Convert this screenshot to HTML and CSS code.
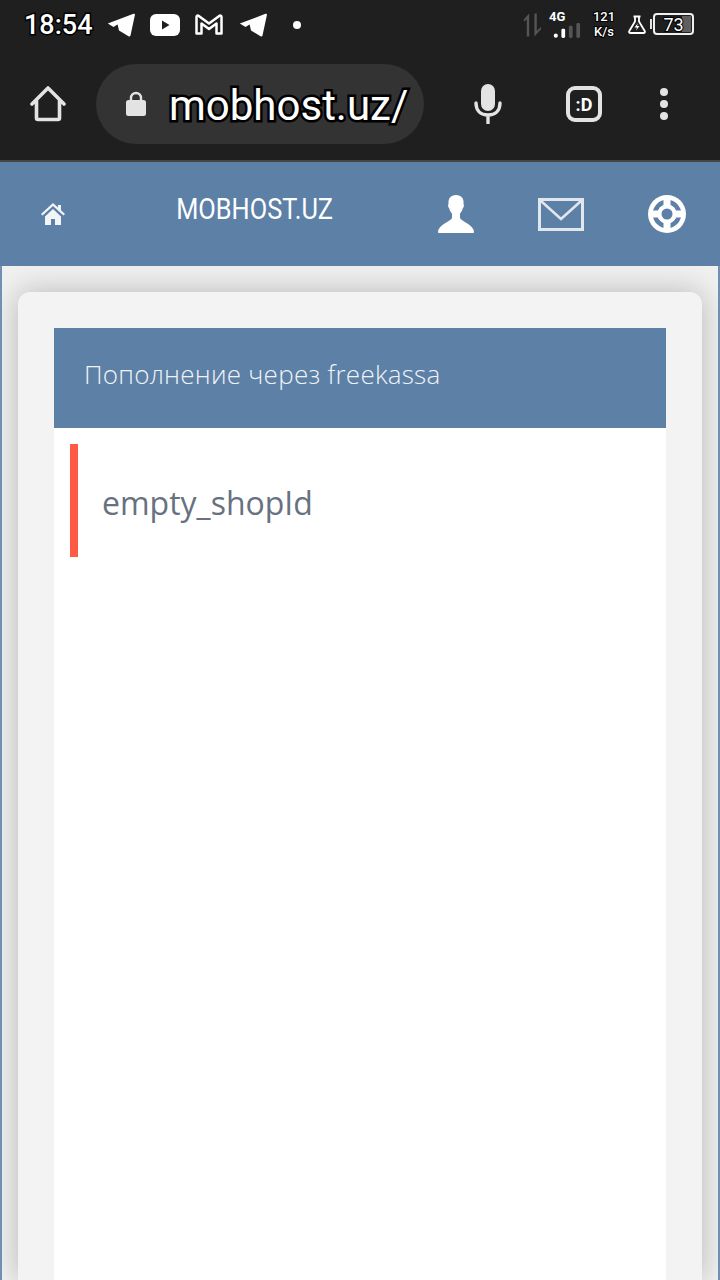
FILE: index.html
```html
<!DOCTYPE html>
<html lang="en">
<head>
    <title>mobhost.uz</title>
    <link rel="stylesheet" href="styles.css">
</head>
<body>
<div class="status-bar">
    <div class="status-left">
        <span class="clock">18:54</span>
        <svg class="ic-tg" viewBox="0 0 28 24"><path d="M.8 10.500 26.500.8c1-.4 1.700.2 1.400 1.300L23.500 22.500c-.3 1.100-1.100 1.400-2 .8L12 17.500 10.500 11 20 5.500 6.500 14z" fill="#fff"/></svg>
        <svg class="ic-yt" viewBox="0 0 30 22"><rect width="30" height="22" rx="6" fill="#fff"/><path d="M12 6.500v9l7.500-4.500z" fill="#1f1f1f"/></svg>
        <svg class="ic-gm" viewBox="0 0 28 21"><path d="M1.500 19.500V3c0-1.300 1.300-1.800 2.300-1.100L14 9.500l10.200-7.600c1-.7 2.300-.2 2.300 1.100v16.500h-5V9.500L14 15 6.500 9.500v10z" fill="none" stroke="#fff" stroke-width="2.500" stroke-linejoin="round"/></svg>
        <svg class="ic-tg" viewBox="0 0 28 24"><path d="M.8 10.500 26.500.8c1-.4 1.700.2 1.400 1.300L23.500 22.500c-.3 1.100-1.100 1.400-2 .8L12 17.500 10.500 11 20 5.500 6.500 14z" fill="#fff"/></svg>
        <span class="dot"></span>
    </div>
    <div class="status-right">
        <svg class="ic-arrows" viewBox="0 0 20 24"><path d="M4 24V6L1 8.500V6L6.500 0V24zM12 0h2.500V18L19 14v2.500L12 24z" fill="#555"/></svg>
        <div class="net">
            <span class="net-label">4G</span>
            <svg class="ic-signal" viewBox="0 0 30 16"><circle cx="3" cy="13.500" r="2.200" fill="#fff"/><rect x="9" y="6" width="4" height="10" rx="1.500" fill="#fff"/><rect x="17" y="3" width="4" height="13" rx="1.500" fill="#555"/><rect x="25" y="0" width="4" height="16" rx="1.500" fill="#555"/></svg>
        </div>
        <div class="speed"><span>121</span><span>K/s</span></div>
        <svg class="ic-flask" viewBox="0 0 18 19"><path d="M5.500 1.500h7M7 1.500v5L1.300 16c-.6 1.100 0 2 1.200 2h13c1.200 0 1.800-.9 1.200-2L11 6.500v-5" fill="none" stroke="#fff" stroke-width="1.800"/><path d="M10 8 6.500 12.500h2.500L8 15.500l3.500-4.500H9z" fill="#fff"/></svg>
        <div class="battery">
            <span class="battery-nub"></span>
            <div class="battery-body"><span class="battery-fill"></span><span class="battery-num">73</span></div>
        </div>
    </div>
</div>

<div class="browser-bar">
    <svg class="ic-browser-home" viewBox="0 0 36 36"><path d="M2 18 18 2l16 16M6.500 15v17c0 1 .5 1.500 1.500 1.500h20c1 0 1.500-.5 1.500-1.500V15" fill="none" stroke="#e3e3e3" stroke-width="3.600" stroke-linecap="round" stroke-linejoin="round"/></svg>
    <div class="url-pill">
        <svg class="ic-lock" viewBox="0 0 20 26"><path d="M5 11V7a5 5 0 0 1 10 0v4" fill="none" stroke="#e3e3e3" stroke-width="2.400"/><rect y="9" width="20" height="16" rx="2.500" fill="#e3e3e3"/></svg>
        <span class="url">mobhost.uz/</span>
    </div>
    <svg class="ic-mic" viewBox="0 0 28 40"><rect x="7" y="0" width="14" height="27" rx="7" fill="#e3e3e3"/><path d="M2 19c0 8 5 12 12 12s12-4 12-12M14 31v8" fill="none" stroke="#e3e3e3" stroke-width="3.400" stroke-linecap="round"/></svg>
    <div class="tab-count">:D</div>
    <div class="menu-dots"><span></span><span></span><span></span></div>
</div>

<div class="site-header">
    <div class="nav-cell">
        <svg class="ic-nav-home" viewBox="0 0 24 22"><path d="M12 0 0 11l1.500 1.500L12 3l10.500 9.500L24 11l-4-3.700V2h-3v2.500zM4 13.500V22h6v-6h4v6h6v-8.500L12 6z" fill="#f2f5f8"/></svg>
    </div>
    <div class="nav-cell site-title">MOBHOST.UZ</div>
    <div class="nav-cell">
        <svg class="ic-user" viewBox="0 0 36 38"><path d="M18 0c5.500 0 8 3.500 7.500 9 .7.500.6 3-.8 4.500-.6 2.500-1.700 4-2.700 5v4.500C23 26 36 30 36 37c0 .6-.4 1-1 1H1c-.6 0-1-.4-1-1 0-7 13-11 14-14v-4.500c-1-1-2.100-2.500-2.700-5-1.400-1.500-1.500-4-.8-4.500C10 3.500 12.500 0 18 0z" fill="#fff"/></svg>
    </div>
    <div class="nav-cell">
        <svg class="ic-mail" viewBox="0 0 46 33"><rect x="1.500" y="1.500" width="43" height="30" fill="none" stroke="#e0e7ee" stroke-width="3"/><path d="M3 3 23 21 43 3" fill="none" stroke="#e0e7ee" stroke-width="2.600"/></svg>
    </div>
    <div class="nav-cell">
        <svg class="ic-buoy" viewBox="0 0 38 38"><circle cx="19" cy="19" r="19" fill="#fff"/><circle cx="19" cy="19" r="12" fill="none" stroke="#5d80a7" stroke-width="4.600"/><path d="M15.500 4h7v30h-7zM4 15.500h30v7H4z" fill="#fff"/><circle cx="19" cy="19" r="9.500" fill="#fff"/><circle cx="19" cy="19" r="5.500" fill="#5d80a7"/></svg>
    </div>
</div>

<div class="page">
    <div class="card">
        <div class="panel">
            <div class="panel-head">Пополнение через freekassa</div>
            <div class="panel-body">
                <div class="alert">empty_shopId</div>
            </div>
        </div>
    </div>
</div>
</body>
</html>
```

FILE: styles.css
```css
html, body {
    margin: 0;
    height: 100%;
}

body {
    width: 720px;
    height: 1280px;
    overflow: hidden;
    display: flex;
    flex-direction: column;
    background: #1f1f1f;
    font-family: "Open Sans", sans-serif;
}

svg {
    display: block;
    flex-shrink: 0;
}

/* phone status bar */
.status-bar {
    height: 48px;
    display: flex;
    justify-content: space-between;
    background: #1f1f1f;
    font-family: Roboto, sans-serif;
    color: #fff;
}

.status-left {
    display: flex;
    align-items: center;
    padding-left: 24px;
    height: 49px;
}

.clock {
    font-size: 27px;
    font-weight: 500;
    width: 83px;
    -webkit-text-stroke: 3px #000;
    paint-order: stroke fill;
}

.ic-tg {
    width: 28px;
    height: 24px;
}

.ic-yt {
    width: 30px;
    height: 22px;
    margin: 0 15px;
}

.ic-gm {
    width: 28px;
    height: 21px;
    margin-right: 16px;
}

.dot {
    width: 8px;
    height: 8px;
    border-radius: 50%;
    background: #fff;
    margin-left: 26px;
}

.status-right {
    display: flex;
    align-items: center;
    padding-right: 26px;
}

.ic-arrows {
    width: 19px;
    height: 24px;
    margin-top: 2px;
}

.net {
    width: 30px;
    margin-left: 7px;
    margin-top: 1px;
    display: flex;
    flex-direction: column;
    align-items: flex-start;
}

.net-label {
    font-size: 13px;
    font-weight: 700;
    line-height: 12px;
}

.ic-signal {
    width: 28px;
    height: 15px;
    margin-left: 4px;
}

.speed {
    display: flex;
    flex-direction: column;
    align-items: center;
    width: 28px;
    margin-left: 11px;
    font-size: 13px;
    font-weight: 500;
    line-height: 15px;
    -webkit-text-stroke: 2px #000;
    paint-order: stroke fill;
}

.ic-flask {
    width: 18px;
    height: 19px;
    margin-left: 10px;
}

.battery {
    display: flex;
    align-items: center;
    margin-left: 4px;
}

.battery-nub {
    width: 2px;
    height: 10px;
    background: #e3e3e3;
    margin-right: 1px;
}

.battery-body {
    width: 37px;
    height: 18px;
    border: 2px solid #f0f0f0;
    border-radius: 4px;
    display: flex;
    align-items: center;
    justify-content: center;
    position: relative;
    font-size: 18px;
}

.battery-fill {
    position: absolute;
    right: 1px;
    top: 1px;
    bottom: 1px;
    width: 9px;
    background: #5f5f5f;
}

.battery-num {
    position: relative;
    -webkit-text-stroke: 2px #000;
    paint-order: stroke fill;
}

/* chrome toolbar */
.browser-bar {
    height: 112px;
    box-sizing: border-box;
    padding: 16px 0 16px 30px;
    display: flex;
    align-items: center;
    background: #1f1f1f;
}

.ic-browser-home {
    width: 36px;
    height: 36px;
}

.url-pill {
    width: 328px;
    height: 80px;
    margin-left: 30px;
    border-radius: 40px;
    background: #333333;
    display: flex;
    align-items: center;
    box-sizing: border-box;
    padding-left: 30px;
}

.ic-lock {
    width: 20px;
    height: 26px;
}

.url {
    margin-left: 23px;
    padding-top: 3px;
    font-family: Roboto, sans-serif;
    font-size: 42px;
    color: #fff;
    -webkit-text-stroke: 5px #000;
    paint-order: stroke fill;
}

.ic-mic {
    width: 28px;
    height: 40px;
    margin-left: 50px;
}

.tab-count {
    width: 36px;
    height: 36px;
    box-sizing: border-box;
    margin-left: 64px;
    border: 4px solid #e3e3e3;
    border-radius: 9px;
    display: flex;
    align-items: center;
    justify-content: center;
    font-family: Roboto, sans-serif;
    font-size: 18px;
    font-weight: 700;
    color: #fff;
}

.menu-dots {
    margin-left: 58px;
    display: flex;
    flex-direction: column;
    gap: 4px;
}

.menu-dots span {
    width: 8px;
    height: 8px;
    border-radius: 50%;
    background: #e3e3e3;
}

/* site */
.site-header {
    height: 104px;
    border-top: 2px solid #454545;
    background: #5d80a7;
    display: grid;
    grid-template-columns: 106px 298px 104px 106px 106px;
    align-items: center;
    justify-items: center;
}

.site-title {
    color: #fff;
    font-family: Roboto, sans-serif;
    font-size: 29px;
    transform: scaleX(.875);
    padding-bottom: 10px;
}

.ic-nav-home {
    width: 24px;
    height: 22px;
}

.ic-user {
    width: 36px;
    height: 38px;
}

.ic-mail {
    width: 46px;
    height: 33px;
}

.ic-buoy {
    width: 38px;
    height: 38px;
}

.page {
    flex: 1;
    min-height: 0;
    border-left: 2px solid #6f90b4;
    border-right: 2px solid #6f90b4;
    background: #f0f0f0;
    padding: 26px 16px 0;
    overflow: hidden;
}

.card {
    height: 100%;
    box-sizing: border-box;
    background: #f3f3f3;
    border-radius: 12px 12px 0 0;
    padding: 36px 36px 0;
    box-shadow: 0 0 30px rgba(0, 0, 0, .24);
}

.panel {
    height: 100%;
    background: #fff;
}

.panel-head {
    height: 100px;
    box-sizing: border-box;
    padding: 0 0 8px 30px;
    background: #5d80a7;
    display: flex;
    align-items: center;
    font-family: "Open Sans", sans-serif;
    font-weight: 300;
    font-size: 26px;
    letter-spacing: .25px;
    color: #f0f3f6;
}

.panel-body {
    padding: 16px;
}

.alert {
    height: 113px;
    box-sizing: border-box;
    padding: 4px 0 0 24px;
    border-left: 8px solid #ff5a45;
    display: flex;
    align-items: center;
    font-size: 32px;
    color: #67717f;
}
```
